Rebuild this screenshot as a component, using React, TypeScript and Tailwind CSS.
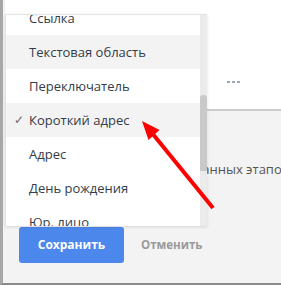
const FIELDS = [
  "Ссылка",
  "Текстовая область",
  "Переключатель",
  "Короткий адрес",
  "Адрес",
  "День рождения",
  "Юр. лицо",
];

const HOVERED = "Текстовая область";
const SELECTED = "Короткий адрес";

function FieldTypeMenu() {
  return (
    <div className="absolute left-[2px] top-[14px] flex h-[212px] w-[202px] overflow-hidden border-t border-l border-[#e4e4e4] bg-white shadow-[0_1px_3px_rgba(0,0,0,0.12)]">
      <ul className="-mt-[14px] flex-1">
        {FIELDS.map((f) => (
          <li
            key={f}
            className={
              "relative flex h-[34px] items-center pl-[23px] pt-[1px] text-[13px] text-[#333d49] " +
              (f === HOVERED || f === SELECTED ? "bg-[#f3f3f3]" : "")
            }
          >
            {f === SELECTED ? (
              <span className="absolute left-[8px] top-[8px] text-[12px] text-[#6b6b6b]">✓</span>
            ) : null}
            {f}
          </li>
        ))}
      </ul>
      <div className="relative w-[7px] bg-[#ebebeb]">
        <div className="absolute left-0 top-[80px] h-[76px] w-[7px] rounded-t-[3px] bg-[#c9c9c9]" />
      </div>
    </div>
  );
}

function Pointer() {
  return (
    <svg className="pointer-events-none absolute left-[-3px] top-0" width="281" height="285">
      <line x1="213" y1="208" x2="152" y2="133" stroke="#ff0000" strokeWidth="4" />
      <polygon points="142,121 159.5,130 148.5,140" fill="#ff0000" />
    </svg>
  );
}

export default function App() {
  return (
    <div
      className="relative h-[285px] w-[281px] overflow-hidden border-b-2 border-l-[3px] border-b-[#8b8b8b] border-l-[#a7a7a7] bg-[#f3f3f3]"
      style={{ fontFamily: '"Open Sans", "Noto Sans", sans-serif' }}
    >
      <div className="ml-[2px] flex h-[111px] items-center justify-end border-b-2 border-[#cbcbcb] bg-white pr-[41px] pt-[54px]">
        <div className="flex gap-[2px]">
          <span className="h-[2px] w-[3px] bg-[#9aa6b8]" />
          <span className="h-[2px] w-[3px] bg-[#9aa6b8]" />
          <span className="h-[2px] w-[3px] bg-[#9aa6b8]" />
        </div>
      </div>
      <div className="flex h-[116px] items-center whitespace-nowrap pl-[2px] pt-[2px] text-[13px] text-[#555]">
        Отображать это поле для выбранных этапов
      </div>
      <div className="flex items-center gap-[17px] pl-[16px]">
        <button className="h-[36px] w-[105px] rounded-[3px] bg-[#4c87ec] text-[12px] font-bold text-white">
          Сохранить
        </button>
        <button className="text-[11.5px] font-bold text-[#9a9a9a]">Отменить</button>
      </div>
      <FieldTypeMenu />
      <Pointer />
    </div>
  );
}
